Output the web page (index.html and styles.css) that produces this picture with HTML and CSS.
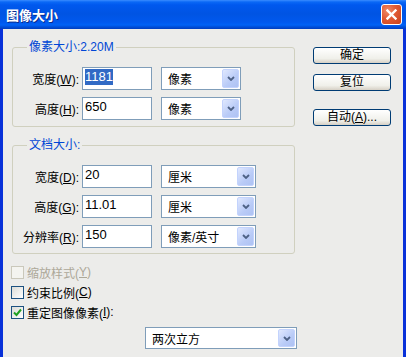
FILE: index.html
```html
<!doctype html>
<html lang="zh-CN">
    <head>
        <meta charset="UTF-8" />
        <title>图像大小</title>
        <link rel="stylesheet" href="styles.css">
    </head>
    <body>
        <div class="window">
            <div class="titlebar">
                <span class="title">图像大小</span>
                <span class="close">
                    <svg width="11" height="11" viewBox="0 0 11 11"><path d="M1.5 1.5 L9.5 9.5 M9.5 1.5 L1.5 9.5" stroke="#fff" stroke-width="2.4" stroke-linecap="square"/></svg>
                </span>
            </div>
            <div class="body">
                <div class="main">
                    <fieldset class="group">
                        <legend>像素大小:2.20M</legend>
                        <div class="row">
                            <label>宽度(<u>W</u>):</label>
                            <div class="field"><span class="selected">1181</span></div>
                            <div class="combo"><span>像素</span><i class="arrow"><svg width="8" height="5" viewBox="0 0 8 5"><path d="M1 1 L4 4 L7 1" fill="none" stroke="#4d6185" stroke-width="1.8"/></svg></i></div>
                        </div>
                        <div class="row">
                            <label>高度(<u>H</u>):</label>
                            <div class="field">650</div>
                            <div class="combo"><span>像素</span><i class="arrow"><svg width="8" height="5" viewBox="0 0 8 5"><path d="M1 1 L4 4 L7 1" fill="none" stroke="#4d6185" stroke-width="1.8"/></svg></i></div>
                        </div>
                    </fieldset>
                    <fieldset class="group doc">
                        <legend>文档大小:</legend>
                        <div class="row">
                            <label>宽度(<u>D</u>):</label>
                            <div class="field">20</div>
                            <div class="combo wide"><span>厘米</span><i class="arrow"><svg width="8" height="5" viewBox="0 0 8 5"><path d="M1 1 L4 4 L7 1" fill="none" stroke="#4d6185" stroke-width="1.8"/></svg></i></div>
                        </div>
                        <div class="row">
                            <label>高度(<u>G</u>):</label>
                            <div class="field">11.01</div>
                            <div class="combo wide"><span>厘米</span><i class="arrow"><svg width="8" height="5" viewBox="0 0 8 5"><path d="M1 1 L4 4 L7 1" fill="none" stroke="#4d6185" stroke-width="1.8"/></svg></i></div>
                        </div>
                        <div class="row">
                            <label>分辨率(<u>R</u>):</label>
                            <div class="field">150</div>
                            <div class="combo wide"><span>像素/英寸</span><i class="arrow"><svg width="8" height="5" viewBox="0 0 8 5"><path d="M1 1 L4 4 L7 1" fill="none" stroke="#4d6185" stroke-width="1.8"/></svg></i></div>
                        </div>
                    </fieldset>
                    <div class="checks">
                        <div class="check disabled"><i class="box"></i>缩放样式(<u>Y</u>)</div>
                        <div class="check"><i class="box"></i>约束比例(<u>C</u>)</div>
                        <div class="check"><i class="box"><svg width="11" height="11" viewBox="0 0 11 11"><path d="M2 5.5 L4.5 8 L9 2.5" fill="none" stroke="#21a121" stroke-width="2"/></svg></i>重定图像像素(<u>I</u>):</div>
                    </div>
                    <div class="combo method"><span>两次立方</span><i class="arrow"><svg width="8" height="5" viewBox="0 0 8 5"><path d="M1 1 L4 4 L7 1" fill="none" stroke="#4d6185" stroke-width="1.8"/></svg></i></div>
                </div>
                <div class="buttons">
                    <button>确定</button>
                    <button>复位</button>
                    <button class="auto">自动(<u>A</u>)...</button>
                </div>
            </div>
        </div>
    </body>
</html>
```

FILE: styles.css
```css
:root {
    --face: #ececea;
    --frame: #0831d9;
    --edit-border: #7f9db9;
}
* {
    box-sizing: border-box;
}
body {
    margin: 0;
    font-family: "Liberation Sans", "Noto Sans CJK SC", sans-serif;
    font-size: 12px;
    color: #000;
}
.window {
    width: 406px;
    height: 357px;
    display: flex;
    flex-direction: column;
    overflow: hidden;
    background: var(--face);
}
.titlebar {
    height: 29px;
    flex: none;
    display: flex;
    align-items: center;
    justify-content: space-between;
    padding: 0 4px 0 6px;
    background: linear-gradient(#3a8cff 0, #0a68f6 2px, #0058ee 5px, #0054e3 14px, #0058ee 22px, #0062f6 25px, #004ed8 27px, #003dbf 29px);
}
.title {
    color: #fff;
    font-weight: bold;
    font-size: 13px;
    font-family: "Noto Sans CJK SC", sans-serif;
    text-shadow: 1px 1px 0 #0a2c8c;
}
.close {
    width: 21px;
    height: 21px;
    border: 1px solid #fff;
    border-radius: 3px;
    display: flex;
    align-items: center;
    justify-content: center;
    background: radial-gradient(circle at 30% 30%, #f08a68, #e05a34 45%, #c7401b);
}
.body {
    flex: 1;
    display: flex;
    border-left: 3px solid var(--frame);
    border-right: 3px solid var(--frame);
    padding: 11px 0 0 9px;
}
.main {
    width: 283px;
}
.group {
    margin: 0;
    padding: 12px 0 6px;
    border: 1px solid #d0d0bf;
    border-radius: 3px;
    min-width: 0;
}
.group legend {
    margin-left: 14px;
    padding: 0 2px;
    color: #0046d5;
    line-height: 15px;
}
.doc {
    margin-top: 11px;
    padding-bottom: 5px;
}
.row {
    display: flex;
    align-items: center;
    height: 23px;
    margin-bottom: 7px;
}
.row:last-of-type {
    margin-bottom: 0;
}
.row label {
    width: 66px;
    margin-right: 3px;
    text-align: right;
    white-space: nowrap;
}
.field {
    width: 70px;
    height: 23px;
    border: 1px solid var(--edit-border);
    background: #fff;
    padding: 1px 0 0 2px;
    font-size: 13px;
    line-height: 16px;
}
.selected {
    background: #316ac5;
    color: #fff;
    display: inline-block;
}
.combo {
    width: 80px;
    height: 23px;
    margin-left: 9px;
    border: 1px solid var(--edit-border);
    background: #fff;
    display: flex;
    align-items: center;
    justify-content: space-between;
    padding: 1px;
}
.combo span {
    padding-left: 5px;
    white-space: nowrap;
}
.combo.wide {
    width: 95px;
}
.arrow {
    width: 17px;
    height: 100%;
    border: 1px solid #c3d3fd;
    border-radius: 2px;
    background: linear-gradient(135deg, #e0e8fe, #b9cbf7 60%, #aec2f3);
    display: flex;
    align-items: center;
    justify-content: center;
}
.checks {
    margin: 8px 0 0 -1px;
}
.check {
    height: 20px;
    display: flex;
    align-items: center;
    white-space: nowrap;
}
.box {
    width: 13px;
    height: 13px;
    margin-right: 3px;
    border: 1px solid #1c5180;
    background: linear-gradient(135deg, #dcdcd7, #fff);
    display: flex;
    align-items: center;
    justify-content: center;
}
.check.disabled {
    color: #aca899;
}
.check.disabled .box {
    border-color: #cac8bb;
    background: #f4f4f0;
}
.combo.method {
    width: 152px;
    height: 22px;
    margin: 5px 0 0 133px;
}
.buttons {
    width: 78px;
    margin: 7px 0 0 18px;
    display: flex;
    flex-direction: column;
}
button {
    height: 17px;
    padding: 0;
    margin-bottom: 10px;
    font: inherit;
    line-height: 15px;
    border: 1px solid #003c74;
    border-radius: 3px;
    background: linear-gradient(#fff, #f0f0ea 70%, #d6d0c5);
    color: #000;
}
button.auto {
    margin-top: 8px;
}
```
